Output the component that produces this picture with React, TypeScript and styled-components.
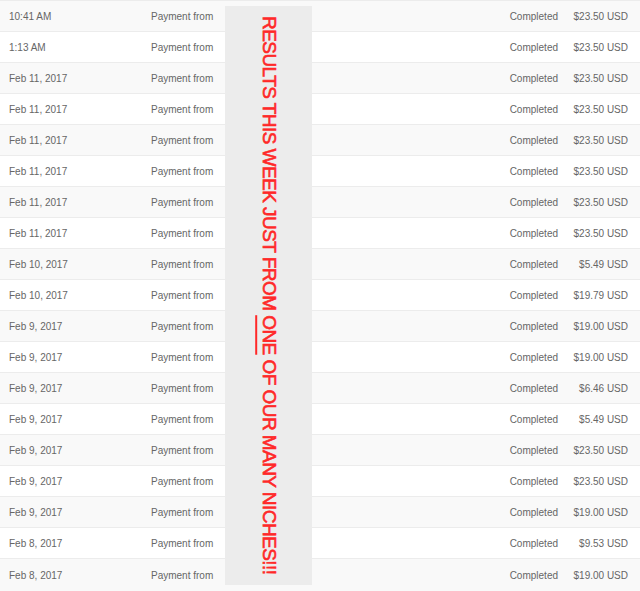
import React from 'react';
import styled, { createGlobalStyle } from 'styled-components';

const GlobalStyle = createGlobalStyle`
  html, body {
    margin: 0;
    padding: 0;
    background: #ffffff;
  }
  body {
    font-family: 'Liberation Sans', Arial, Helvetica, sans-serif;
  }
`;

const Page = styled.div`
  position: relative;
  width: 640px;
  height: 591px;
  overflow: hidden;
  background: #ffffff;
`;

const Table = styled.div`
  display: flex;
  flex-direction: column;
`;

const Row = styled.div<{ $shaded: boolean; $last?: boolean }>`
  display: grid;
  grid-template-columns: 142px 1fr auto 70px;
  align-items: center;
  height: ${({ $last }) => ($last ? '32px' : '30px')};
  border-top: 1px solid #ececec;
  background: ${({ $shaded }) => ($shaded ? '#f9f9f9' : '#ffffff')};
  padding: 0 12px 0 9px;
  font-size: 10px;
  color: #666666;
`;

const Cell = styled.div<{ $align?: 'left' | 'right' }>`
  text-align: ${({ $align }) => $align || 'left'};
  white-space: nowrap;
  padding-top: 1px;
`;

const Banner = styled.div`
  position: absolute;
  left: 225px;
  top: 6px;
  width: 87px;
  height: 579px;
  background: #ececec;
  display: flex;
  align-items: center;
  justify-content: center;
`;

const BannerText = styled.div`
  writing-mode: vertical-rl;
  font-family: 'Liberation Sans', Arial, sans-serif;
  font-size: 19px;
  letter-spacing: -0.55px;
  color: #ff2828;
  -webkit-text-stroke: 0.6px #ff2828;
  white-space: nowrap;
  line-height: 1;
  padding-left: 2px;

  u {
    text-decoration-thickness: 1.5px;
    text-underline-offset: 2px;
  }
`;

const rows = [
  ['10:41 AM', '$23.50 USD'],
  ['1:13 AM', '$23.50 USD'],
  ['Feb 11, 2017', '$23.50 USD'],
  ['Feb 11, 2017', '$23.50 USD'],
  ['Feb 11, 2017', '$23.50 USD'],
  ['Feb 11, 2017', '$23.50 USD'],
  ['Feb 11, 2017', '$23.50 USD'],
  ['Feb 11, 2017', '$23.50 USD'],
  ['Feb 10, 2017', '$5.49 USD'],
  ['Feb 10, 2017', '$19.79 USD'],
  ['Feb 9, 2017', '$19.00 USD'],
  ['Feb 9, 2017', '$19.00 USD'],
  ['Feb 9, 2017', '$6.46 USD'],
  ['Feb 9, 2017', '$5.49 USD'],
  ['Feb 9, 2017', '$23.50 USD'],
  ['Feb 9, 2017', '$23.50 USD'],
  ['Feb 9, 2017', '$19.00 USD'],
  ['Feb 8, 2017', '$9.53 USD'],
  ['Feb 8, 2017', '$19.00 USD'],
];

const App: React.FC = () => (
  <>
    <GlobalStyle />
    <Page>
      <Table>
        {rows.map(([date, amount], i) => (
          <Row key={i} $shaded={i % 2 === 0} $last={i === rows.length - 1}>
            <Cell>{date}</Cell>
            <Cell>Payment from</Cell>
            <Cell $align="right">Completed</Cell>
            <Cell $align="right">{amount}</Cell>
          </Row>
        ))}
      </Table>
      <Banner>
        <BannerText>
          RESULTS THIS WEEK JUST FROM <u>ONE</u> OF OUR MANY NICHES!!!
        </BannerText>
      </Banner>
    </Page>
  </>
);

export default App;
